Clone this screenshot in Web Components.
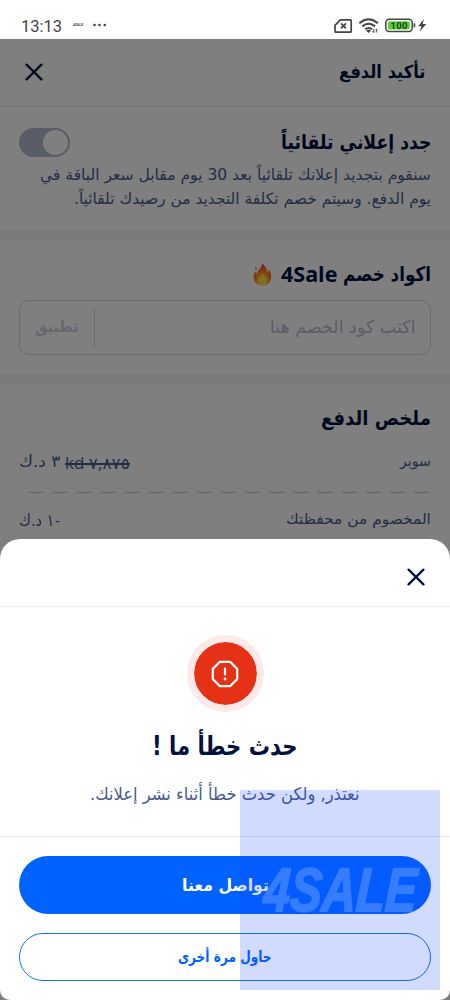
<!DOCTYPE html>
<html lang="ar">
<head>
<meta charset="utf-8">
<title>تأكيد الدفع</title>
<style>html,body{margin:0;padding:0;background:#808080;overflow:hidden}</style>
</head>
<body>
<payment-app></payment-app>
<script>
function define(name, html, after) {
  const t = document.createElement('template');
  t.innerHTML = html;
  customElements.define(name, class extends HTMLElement {
    connectedCallback() {
      if (!this.shadowRoot) this.attachShadow({mode: 'open'}).append(t.content.cloneNode(true));
      if (after) after(this, this.shadowRoot);
    }
  });
}

// A single line of text, stretched horizontally to width w; s is the font size, b makes it bold.
define('fit-text', `<style>
:host{display:block;height:24px;line-height:24px;white-space:nowrap;direction:rtl;flex:none;font-family:"DejaVu Sans",sans-serif}
:host([ltr]){direction:ltr}
span{display:inline-block;transform-origin:100% 50%}
:host([ltr]) span{transform-origin:0 50%}
</style><span><slot></slot></span>`, (el, root) => {
  el.style.fontSize = el.getAttribute('s') + 'px';
  if (el.hasAttribute('b')) el.style.fontWeight = 700;
  const w = +el.getAttribute('w'), span = root.querySelector('span');
  el.style.width = w + 'px';
  const n = span.offsetWidth;
  if (n) span.style.transform = 'scaleX(' + w / n + ')';
});

define('close-icon', `<style>:host{display:block;width:18px;height:18px}svg{display:block}</style>
<svg width="18" height="18" viewBox="0 0 18 18"><path d="M1.6 1.6 16.4 16.4M16.4 1.6 1.6 16.4" fill="none" stroke="#00113f" stroke-width="2.3" stroke-linecap="round"/></svg>`);

define('status-bar', `<style>
:host{display:flex;height:39px;box-sizing:border-box;padding:14px 22px 0 21px;background:#fff;align-items:flex-start;color:#444}
fit-text{font-family:Roboto,sans-serif}
.s{flex:1}svg{display:block}
.tiny{margin-left:11px;margin-top:-1px;font-weight:700;font-style:italic}
</style>
<fit-text ltr s="17.3" w="41">13:13</fit-text><fit-text class="tiny" ltr s="3.5" w="10">4SALE</fit-text>
<svg width="16" height="24" style="margin-left:9px"><g fill="#444"><circle cx="2.500" cy="11" r="1.300"/><circle cx="7.500" cy="11" r="1.300"/><circle cx="12.800" cy="11" r="1.300"/></g></svg>
<div class="s"></div>
<svg width="94" height="24" viewBox="334 14 94 24">
<path d="M340.300 19.800h9.900q1 0 1 1v10.400q0 1-1 1h-14.200q-1 0-1-1v-5.900z" fill="none" stroke="#444" stroke-width="1.700" stroke-linejoin="round"/>
<path d="m341 23.300 5 5m0-5-5 5" stroke="#444" stroke-width="1.700"/>
<g fill="none" stroke="#444" stroke-width="2"><path d="M359.300 23.200q9.300-8 18.600 0"/><path d="M362.300 26.400q6.400-5.200 12.800 0"/><path d="M365.300 29.300q3.400-2.600 6.800 0"/></g>
<path d="m366 30.500 2.600 2.600 2.600-2.600q-2.600-1.600-5.200 0z" fill="#444"/>
<path d="M373.800 29v3.500m0 0-1.200-1.300M376.300 32.500V29m0 0 1.200 1.300" stroke="#444" stroke-width="1"/>
<rect x="385.800" y="19.200" width="26.400" height="12.200" rx="3.400" fill="#fff" stroke="#444" stroke-width="1.500"/>
<rect x="388" y="21.200" width="21.800" height="8.200" rx="1.600" fill="#55d52d"/>
<path d="M414 23.300q1 0 1 2t-1 2z" fill="#444" stroke="#444" stroke-width=".7"/>
<text x="390.500" y="28.800" font-family="Roboto,sans-serif" font-size="9.500" font-weight="700" fill="#263c22" textLength="17">100</text>
<path d="m424 19-5.800 7.200h3.300l-1.700 5.300 6.500-7.400h-3.700z" fill="#444"/>
</svg>`);

define('page-header', `<style>
:host{display:flex;direction:rtl;height:68px;box-sizing:border-box;border-bottom:1px solid #e4e6ee;padding:20px 25px 0;justify-content:space-between;color:#00113f}
close-icon{margin-top:4px}
</style><fit-text b s="18" w="86" style="margin-top:1px">تأكيد الدفع</fit-text><close-icon></close-icon>`);

define('toggle-switch', `<style>
:host{display:block;box-sizing:border-box;width:51px;height:29px;border-radius:15px;background:#b3bbd0;padding:2px 2px 2px 24px}
i{display:block;width:25px;height:25px;border-radius:50%;background:#fff}
</style><i></i>`);

define('renew-section', `<style>
:host{display:block;direction:rtl;height:123px;padding:21px 19px 0;box-sizing:border-box;color:#4a5a8c}
.r{display:flex;justify-content:space-between;height:32px}
.r fit-text{color:#00113f;margin-top:2px}
</style><div class="r"><fit-text b s="20" w="150">جدد إعلاني تلقائياً</fit-text><toggle-switch></toggle-switch></div>
<fit-text s="15.5" w="391" style="margin-top:3px">سنقوم بتجديد إعلانك تلقائياً بعد 30 يوم مقابل سعر الباقة في</fit-text>
<fit-text s="15.5" w="357">يوم الدفع. وسيتم خصم تكلفة التجديد من رصيدك تلقائياً.</fit-text>`);

define('promo-section', `<style>
:host{display:block;direction:rtl;height:135px;padding:23px 19px 0;box-sizing:border-box}
.r{display:flex;height:38px;color:#00113f}
.r svg{margin-right:9px}
.box{display:flex;align-items:center;height:55px;box-sizing:border-box;border:1px solid #d2d5e5;border-radius:10px;padding:0 14.500px;color:#b6bacd}
.box fit-text{margin-top:-2px}
.sep{width:1px;height:38px;background:#d2d5e5;margin-right:auto;margin-left:15px}
</style><div class="r"><fit-text b s="20" w="88">اكواد خصم</fit-text><fit-text ltr b s="21.5" w="56" style="margin-right:6px;font-family:'Open Sans',sans-serif;font-weight:600">4Sale</fit-text>
<svg width="19" height="24" viewBox="0 0 19 24"><defs><radialGradient id="f" cx=".5" cy=".8" r=".75"><stop offset="0" stop-color="#fff56e"/><stop offset=".3" stop-color="#ffc02c"/><stop offset=".6" stop-color="#ff7a1e"/><stop offset="1" stop-color="#ee3c20"/></radialGradient></defs><path d="M9 1c2 3 5.400 5 5.200 9.500C15.500 9.800 15.700 8 15.500 7c2 3 3.200 6 2.600 9.500C17.300 21 13.500 23.500 9.500 23.500S1.300 21 .8 16.500C.4 13 1.600 11 2.500 9.500c.2 1.300.5 2 1.300 2.500C4 8 9.500 6 9 1z" fill="url(#f)"/><path d="M9.600 11c1 3 4.200 4.500 4.200 8 0 2.300-1.800 4-4.300 4s-4.400-1.600-4.400-4c0-1.700.6-2.800 1.500-3.700.3 1 .6 1.500 1.200 1.700C9 15 9.500 13.500 9.600 11z" fill="#ffdf48"/><path d="M2.500 5q1.800 1 .5 3.500Q1.700 7 2.500 5z" fill="#ee4b27"/></svg></div>
<div class="box"><fit-text s="17.5" w="146">اكتب كود الخصم هنا</fit-text><div class="sep"></div><fit-text b s="15.500" w="44" style="color:#cdd0e0">تطبيق</fit-text></div>`);

define('summary-section', `<style>
:host{display:block;direction:rtl;padding:23px 19px 0;color:#4a5a8c}
.r{display:flex;justify-content:space-between}
.p{display:flex;gap:5px}
svg{display:block}
s{text-decoration:none;position:relative;display:block}
s:after{content:"";position:absolute;left:0;right:0;top:14px;height:2px;background:#4a5a8c}
</style><fit-text b s="20" w="110" style="color:#00113f">ملخص الدفع</fit-text>
<div class="r" style="margin-top:19px;height:24px"><fit-text s="15" w="31">سوبر</fit-text><div class="p"><s><fit-text ltr s="16" w="65" style="margin-top:2px;font-family:'Open Sans','DejaVu Sans',sans-serif">kd ٧,٨٧٥</fit-text></s><fit-text s="16.5" w="41" style="margin-top:1px">٣ د.ك</fit-text></div></div>
<svg width="412" height="34"><path d="M9.500 19.500H411" stroke="#c9cede" stroke-width="1.300" stroke-dasharray="15 9.050"/></svg>
<div class="r"><fit-text s="15" w="145">المخصوم من محفظتك</fit-text><div class="p" style="gap:1px;margin-top:2px"><fit-text s="16" w="5">-</fit-text><fit-text s="16.5" w="35">١ د.ك</fit-text></div></div>`);

define('alert-badge', `<style>
:host{display:flex;width:63px;height:63px;border:7px solid #fde9e7;background:#e53217;background-clip:padding-box;border-radius:50%;align-items:center;justify-content:center}
</style><svg width="28" height="28" viewBox="0 0 28 28" fill="none" stroke="#fff" stroke-width="2.200" stroke-linecap="round" stroke-linejoin="round"><path d="M8.900 1.800h10.200l7.100 7.100v10.200l-7.100 7.100H8.900l-7.100-7.100V8.900zM14 8.500v6"/><circle cx="14" cy="19" r="1.400" fill="#fff" stroke="none"/></svg>`);

define('pill-button', `<style>
:host{display:flex;box-sizing:border-box;height:58px;border-radius:29px;background:#0062ff;color:#fff;align-items:center;justify-content:center}
:host([outline]){height:48px;background:#fff;border:1px solid #1a70f5;color:#0062ff}
</style><slot></slot>`);

define('brand-watermark', `<style>
:host{display:block;width:200px;height:200px;background:rgba(20,65,255,.195);overflow:hidden}
svg{display:block}
</style><svg width="200" height="200"><g opacity=".2"><text transform="translate(23 121) skewX(-3) scale(1 1.280)" font-family="'Liberation Sans',sans-serif" font-size="48" font-weight="700" font-style="italic" textLength="153" lengthAdjust="spacingAndGlyphs" fill="#fff" stroke="#fff" stroke-width="1.500" stroke-linejoin="round">4SALE</text></g></svg>`);

define('error-sheet', `<style>
:host{display:block;background:#fff;border-radius:20px 20px 10px 10px;height:461px;overflow:hidden}
.top{display:flex;direction:rtl;height:68px;box-sizing:border-box;border-bottom:1px solid #e7e9f2;padding:29px 25px 0}
.body{display:flex;flex-direction:column;align-items:center;height:230px;box-sizing:border-box;border-bottom:1px solid #e2e6f4;padding-top:28px;color:#4a5a8c}
.foot{padding:19px;display:flex;flex-direction:column;gap:19px}
</style>
<div class="top"><close-icon></close-icon></div>
<div class="body"><alert-badge></alert-badge><fit-text b s="26" w="146" style="margin-top:22px;color:#00113f">حدث خطأ ما !</fit-text><fit-text s="17.5" w="270" style="margin-top:24px">نعتذر, ولكن حدث خطأ أثناء نشر إعلانك.</fit-text></div>
<div class="foot"><pill-button><fit-text b s="17" w="87">تواصل معنا</fit-text></pill-button><pill-button outline><fit-text b s="15.500" w="94">حاول مرة أخرى</fit-text></pill-button></div>`);

define('payment-app', `<style>
:host{display:block;position:relative;width:450px;height:1000px;overflow:hidden}
.page{position:relative;height:961px;background:#fff}
.band{height:9px;background:#f4f5f9}
.dim{position:absolute;inset:0;background:rgba(0,0,0,.5)}
error-sheet{position:absolute;left:0;right:0;bottom:0}
brand-watermark{position:absolute;left:240px;top:790px}
</style>
<status-bar></status-bar>
<div class="page"><page-header></page-header><renew-section></renew-section><div class="band"></div><promo-section></promo-section><div class="band"></div><summary-section></summary-section><div class="dim"></div></div>
<error-sheet></error-sheet><brand-watermark></brand-watermark>`);
</script>
</body>
</html>
